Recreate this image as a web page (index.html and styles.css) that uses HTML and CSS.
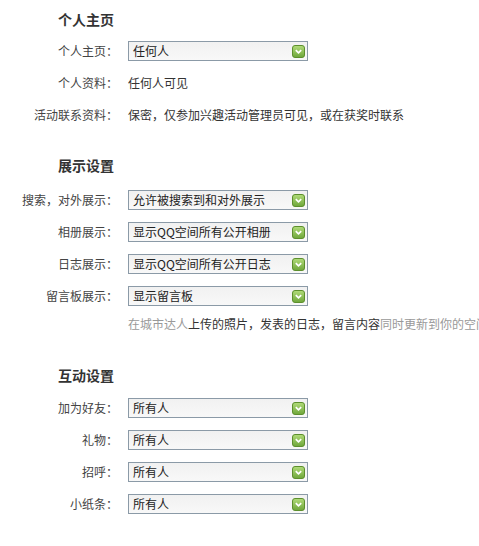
FILE: index.html
```html
<!DOCTYPE html>
<html lang="zh-CN">
<head>
<meta charset="utf-8">
<title>设置</title>
<link rel="stylesheet" href="styles.css">
</head>
<body>
<div class="page">
  <section class="section first">
    <h2 class="heading">个人主页</h2>
    <div class="row">
      <span class="label">个人主页：</span>
      <div class="select"><span class="value">任何人</span><svg class="arrow" viewBox="0 0 13 13"><defs><linearGradient id="g1" x1="0" y1="0" x2="0" y2="1"><stop offset="0" stop-color="#b2dc7a"/><stop offset="1" stop-color="#6ea63a"/></linearGradient></defs><rect x="0.5" y="0.5" width="12" height="12" rx="2.5" fill="url(#g1)" stroke="#5d8f2d"/><polyline points="3.8,5.2 6.5,7.9 9.2,5.2" fill="none" stroke="#fff" stroke-width="1.7"/></svg></div>
    </div>
    <div class="row">
      <span class="label">个人资料：</span>
      <span class="text">任何人可见</span>
    </div>
    <div class="row">
      <span class="label">活动联系资料：</span>
      <span class="text">保密，仅参加兴趣活动管理员可见，或在获奖时联系</span>
    </div>
  </section>

  <section class="section second">
    <h2 class="heading">展示设置</h2>
    <div class="row">
      <span class="label">搜索，对外展示：</span>
      <div class="select"><span class="value">允许被搜索到和对外展示</span><svg class="arrow" viewBox="0 0 13 13"><rect x="0.5" y="0.5" width="12" height="12" rx="2.5" fill="url(#g1)" stroke="#5d8f2d"/><polyline points="3.8,5.2 6.5,7.9 9.2,5.2" fill="none" stroke="#fff" stroke-width="1.7"/></svg></div>
    </div>
    <div class="row">
      <span class="label">相册展示：</span>
      <div class="select"><span class="value">显示QQ空间所有公开相册</span><svg class="arrow" viewBox="0 0 13 13"><rect x="0.5" y="0.5" width="12" height="12" rx="2.5" fill="url(#g1)" stroke="#5d8f2d"/><polyline points="3.8,5.2 6.5,7.9 9.2,5.2" fill="none" stroke="#fff" stroke-width="1.7"/></svg></div>
    </div>
    <div class="row">
      <span class="label">日志展示：</span>
      <div class="select"><span class="value">显示QQ空间所有公开日志</span><svg class="arrow" viewBox="0 0 13 13"><rect x="0.5" y="0.5" width="12" height="12" rx="2.5" fill="url(#g1)" stroke="#5d8f2d"/><polyline points="3.8,5.2 6.5,7.9 9.2,5.2" fill="none" stroke="#fff" stroke-width="1.7"/></svg></div>
    </div>
    <div class="row">
      <span class="label">留言板展示：</span>
      <div class="select"><span class="value">显示留言板</span><svg class="arrow" viewBox="0 0 13 13"><rect x="0.5" y="0.5" width="12" height="12" rx="2.5" fill="url(#g1)" stroke="#5d8f2d"/><polyline points="3.8,5.2 6.5,7.9 9.2,5.2" fill="none" stroke="#fff" stroke-width="1.7"/></svg></div>
    </div>
    <p class="note"><span class="muted">在城市达人</span>上传的照片，发表的日志，留言内容<span class="muted">同时更新到你的空间</span></p>
  </section>

  <section class="section third">
    <h2 class="heading">互动设置</h2>
    <div class="row">
      <span class="label">加为好友：</span>
      <div class="select"><span class="value">所有人</span><svg class="arrow" viewBox="0 0 13 13"><rect x="0.5" y="0.5" width="12" height="12" rx="2.5" fill="url(#g1)" stroke="#5d8f2d"/><polyline points="3.8,5.2 6.5,7.9 9.2,5.2" fill="none" stroke="#fff" stroke-width="1.7"/></svg></div>
    </div>
    <div class="row">
      <span class="label">礼物：</span>
      <div class="select"><span class="value">所有人</span><svg class="arrow" viewBox="0 0 13 13"><rect x="0.5" y="0.5" width="12" height="12" rx="2.5" fill="url(#g1)" stroke="#5d8f2d"/><polyline points="3.8,5.2 6.5,7.9 9.2,5.2" fill="none" stroke="#fff" stroke-width="1.7"/></svg></div>
    </div>
    <div class="row">
      <span class="label">招呼：</span>
      <div class="select"><span class="value">所有人</span><svg class="arrow" viewBox="0 0 13 13"><rect x="0.5" y="0.5" width="12" height="12" rx="2.5" fill="url(#g1)" stroke="#5d8f2d"/><polyline points="3.8,5.2 6.5,7.9 9.2,5.2" fill="none" stroke="#fff" stroke-width="1.7"/></svg></div>
    </div>
    <div class="row">
      <span class="label">小纸条：</span>
      <div class="select"><span class="value">所有人</span><svg class="arrow" viewBox="0 0 13 13"><rect x="0.5" y="0.5" width="12" height="12" rx="2.5" fill="url(#g1)" stroke="#5d8f2d"/><polyline points="3.8,5.2 6.5,7.9 9.2,5.2" fill="none" stroke="#fff" stroke-width="1.7"/></svg></div>
    </div>
  </section>
</div>
</body>
</html>
```

FILE: styles.css
```css
html, body {
  margin: 0;
  padding: 0;
  background: #ffffff;
  overflow: hidden;
}

body {
  font-family: "Noto Sans CJK SC", "Noto Sans", sans-serif;
  font-size: 12px;
  color: #333333;
}

.page {
  width: 479px;
  height: 546px;
  overflow: hidden;
}

.section {
  display: flex;
  flex-direction: column;
}

.section.first {
  padding-top: 3px;
}

.section.second {
  margin-top: 18px;
}

.section.second .heading {
  margin-bottom: 3px;
}

.section.third {
  margin-top: 23px;
}

.section.third .heading {
  margin-bottom: 1px;
}

.heading {
  margin: 0;
  height: 32px;
  line-height: 32px;
  padding-left: 58px;
  font-size: 14px;
  font-weight: bold;
  color: #333333;
}

.row {
  display: flex;
  align-items: center;
  height: 32px;
  gap: 10px;
}

.label {
  width: 118px;
  flex: none;
  text-align: right;
  color: #444444;
  white-space: nowrap;
  line-height: 20px;
}

.text {
  white-space: nowrap;
  color: #333333;
  line-height: 20px;
}

.select {
  box-sizing: border-box;
  width: 180px;
  height: 20px;
  border: 1px solid #8b9aa7;
  background: linear-gradient(#f1f1f1, #f8f8f8);
  display: flex;
  align-items: center;
  justify-content: space-between;
  padding: 0 2px 0 4px;
}

.value {
  color: #222222;
  line-height: 18px;
  white-space: nowrap;
}

.arrow {
  width: 13px;
  height: 13px;
  flex: none;
  display: block;
}

.note {
  margin: 0;
  height: 24px;
  line-height: 24px;
  padding-left: 128px;
  white-space: nowrap;
  color: #333333;
}

.muted {
  color: #999999;
}
```
